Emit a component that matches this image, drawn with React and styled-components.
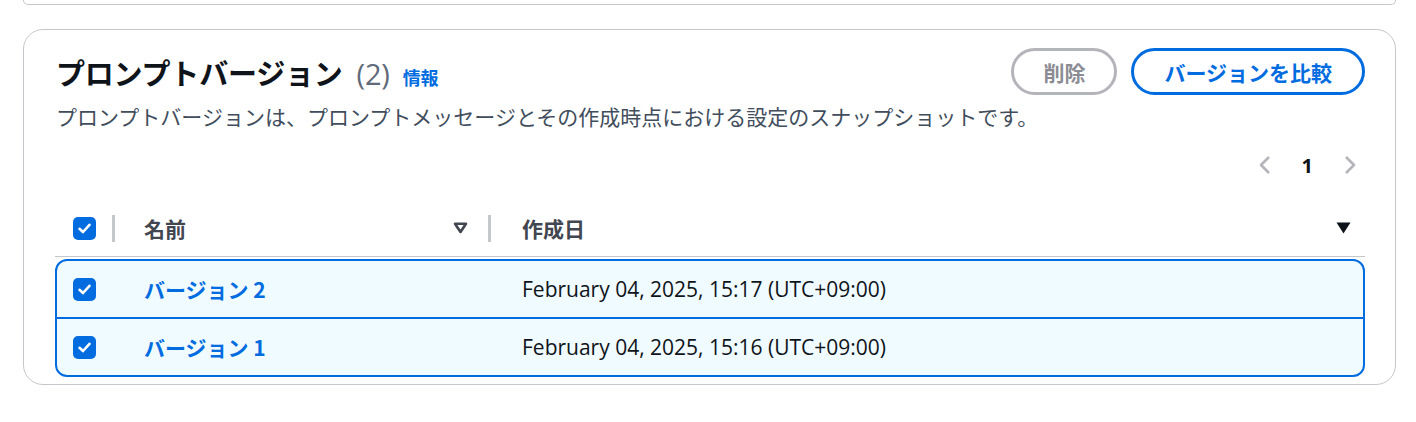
import React from 'react'
import styled, { createGlobalStyle } from 'styled-components'

const GlobalStyle = createGlobalStyle`
  body {
    margin: 0;
    background: #ffffff;
    font-family: "Open Sans", "Noto Sans CJK JP", sans-serif;
    color: #0f141a;
  }
`

const Page = styled.div`
  padding: 0 20px 0 23px;
`

const PrevCard = styled.div`
  height: 4px;
  border: 1px solid #c6c6cd;
  border-top: none;
  border-radius: 0 0 20px 20px;
`

const Card = styled.section`
  margin-top: 24px;
  border: 1px solid #c6c6cd;
  border-radius: 20px;
  padding: 18px 30px 7px 31px;
`

const HeaderRow = styled.div`
  display: flex;
  align-items: center;
  justify-content: space-between;
  height: 47px;
`

const Title = styled.h2`
  margin: 0;
  display: flex;
  align-items: baseline;
  font-family: "Noto Sans CJK JP", sans-serif;
  font-size: 29px;
  font-weight: 700;
  letter-spacing: -0.2px;
  color: #0f141a;
  padding-left: 1px;
`

const Counter = styled.span`
  margin-left: 14px;
  font-family: "Open Sans", "Noto Sans CJK JP", sans-serif;
  font-weight: 400;
  color: #5f6b7a;
`

const InfoLink = styled.a`
  margin-left: 13px;
  font-family: "Noto Sans CJK JP", sans-serif;
  font-size: 18px;
  font-weight: 700;
  color: #006ce0;
  text-decoration: none;
`

const Actions = styled.div`
  display: flex;
  gap: 14px;
`

const Button = styled.button`
  height: 47px;
  padding: 0 ${p => (p.$disabled ? '29px' : '30px')};
  border-radius: 30px;
  border: 3px solid ${p => (p.$disabled ? '#b4b4bb' : '#006ce0')};
  background: #ffffff;
  color: ${p => (p.$disabled ? '#8c8c94' : '#006ce0')};
  font-family: "Noto Sans CJK JP", sans-serif;
  font-size: 21px;
  font-weight: 700;
  cursor: ${p => (p.$disabled ? 'default' : 'pointer')};
`

const Description = styled.p`
  margin: 6px 0 0;
  font-family: "Noto Sans CJK JP", sans-serif;
  font-size: 21px;
  line-height: 30px;
  color: #414d5c;
  padding-left: 1px;
`

const Pager = styled.div`
  display: flex;
  justify-content: flex-end;
  align-items: center;
  gap: 30px;
  height: 40px;
  margin-top: 14px;
  padding-right: 8px;
`

const PageNum = styled.span`
  font-family: "Open Sans", sans-serif;
  font-size: 20px;
  font-weight: 700;
  color: #0f141a;
`

const Table = styled.div`
  margin-top: 18px;
`

const HeadRow = styled.div`
  display: grid;
  grid-template-columns: 60px 376px 1fr;
  height: 53px;
  border-bottom: 1px solid #c6c6cd;
  margin-bottom: 2px;
`

const HeadCell = styled.div`
  display: flex;
  align-items: center;
  justify-content: space-between;
  padding-left: ${p => p.$pad}px;
  padding-right: ${p => p.$right || 0}px;
  padding-bottom: 3px;
  font-family: "Noto Sans CJK JP", sans-serif;
  font-size: 21px;
  font-weight: 700;
  color: #424650;
`

const Divider = styled.span`
  width: 3px;
  height: 27px;
  background: #c6c6cd;
`

const SortArea = styled.span`
  display: flex;
  align-items: center;
  gap: 20px;
`

const RowGroup = styled.div`
  border: 2px solid #006ce0;
  border-radius: 12px;
  background: #f0fbff;
  overflow: hidden;
`

const Row = styled.div`
  display: grid;
  grid-template-columns: 56px 376px 1fr;
  height: 56px;
  align-items: center;
  border-top: ${p => (p.$first ? 'none' : '2px solid #006ce0')};
`

const Cell = styled.div`
  padding-left: ${p => p.$pad}px;
  display: flex;
  align-items: center;
`

const NameLink = styled.a`
  font-family: "Noto Sans CJK JP", sans-serif;
  font-size: 21px;
  font-weight: 700;
  color: #006ce0;
  text-decoration: none;
`

const DateText = styled.span`
  font-family: "Open Sans", "Noto Sans CJK JP", sans-serif;
  font-size: 21px;
  color: #0f141a;
`

const Box = styled.span`
  width: 23px;
  height: 23px;
  border-radius: 5px;
  background: #006ce0;
  display: inline-flex;
  align-items: center;
  justify-content: center;
`

const Checkbox = () => (
  <Box>
    <svg width="15" height="15" viewBox="0 0 15 15">
      <path d="M2.5 7.8 L6 11 L12.5 3.8" fill="none" stroke="#fff" strokeWidth="2.6" strokeLinecap="round" strokeLinejoin="round" />
    </svg>
  </Box>
)

const Chevron = ({ dir }) => (
  <svg width="14" height="20" viewBox="0 0 14 20">
    <path
      d={dir === 'left' ? 'M11 2 L3 10 L11 18' : 'M3 2 L11 10 L3 18'}
      fill="none"
      stroke="#b4b4bb"
      strokeWidth="2.6"
      strokeLinejoin="round"
    />
  </svg>
)

const SortIcon = ({ active }) => (
  <svg width="15" height="12" viewBox="0 0 15 12">
    {active ? (
      <path d="M0.5 0.5 H14.5 L7.5 11.5 Z" fill="#0f141a" />
    ) : (
      <path d="M2 1.8 H13 L7.5 10 Z" fill="none" stroke="#424650" strokeWidth="2.6" strokeLinejoin="round" />
    )}
  </svg>
)

const versions = [
  { name: 'バージョン 2', date: 'February 04, 2025, 15:17 (UTC+09:00)' },
  { name: 'バージョン 1', date: 'February 04, 2025, 15:16 (UTC+09:00)' },
]

const App = () => (
  <>
    <GlobalStyle />
    <Page>
      <PrevCard />
      <Card>
        <HeaderRow>
          <Title>
            プロンプトバージョン
            <Counter>(2)</Counter>
            <InfoLink href="#">情報</InfoLink>
          </Title>
          <Actions>
            <Button $disabled>削除</Button>
            <Button>バージョンを比較</Button>
          </Actions>
        </HeaderRow>
        <Description>
          プロンプトバージョンは、プロンプトメッセージとその作成時点における設定のスナップショットです。
        </Description>
        <Pager>
          <Chevron dir="left" />
          <PageNum>1</PageNum>
          <Chevron dir="right" />
        </Pager>
        <Table>
          <HeadRow>
            <HeadCell $pad={18}>
              <Checkbox />
              <Divider />
            </HeadCell>
            <HeadCell $pad={29}>
              名前
              <SortArea>
                <SortIcon />
                <Divider />
              </SortArea>
            </HeadCell>
            <HeadCell $pad={31} $right={14}>
              作成日
              <SortIcon active />
            </HeadCell>
          </HeadRow>
          <RowGroup>
            {versions.map((v, i) => (
              <Row key={v.name} $first={i === 0}>
                <Cell $pad={16}>
                  <Checkbox />
                </Cell>
                <Cell $pad={31}>
                  <NameLink href="#">{v.name}</NameLink>
                </Cell>
                <Cell $pad={33}>
                  <DateText>{v.date}</DateText>
                </Cell>
              </Row>
            ))}
          </RowGroup>
        </Table>
      </Card>
    </Page>
  </>
)

export default App
